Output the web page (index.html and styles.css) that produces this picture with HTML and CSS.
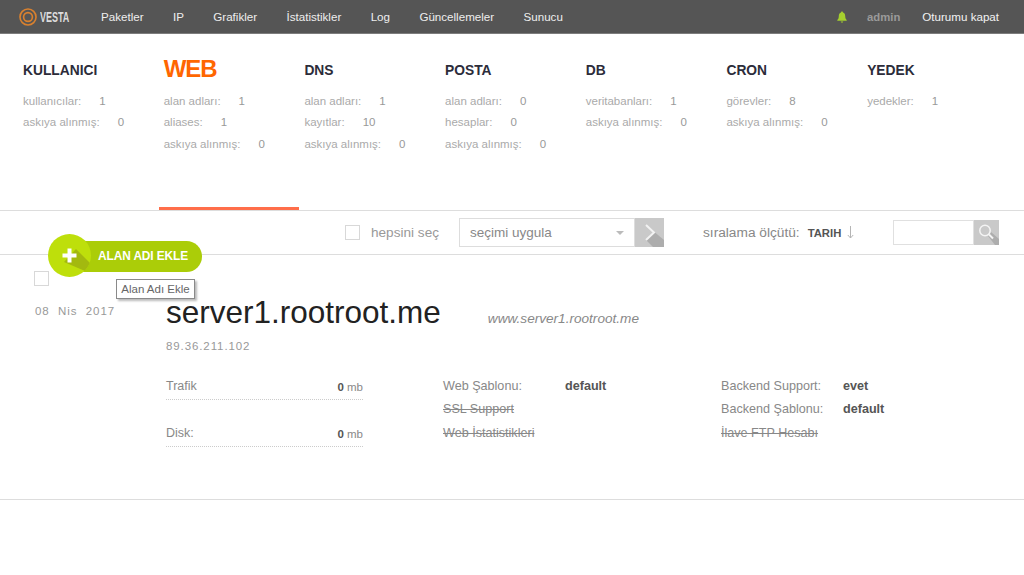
FILE: index.html
```html
<!DOCTYPE html>
<html lang="tr">
<head>
<meta charset="utf-8">
<title>Vesta</title>
<link rel="stylesheet" href="styles.css">
</head>
<body>
<header class="topbar">
  <div class="logo">
    <svg class="logo-mark" width="18" height="18" viewBox="0 0 22 22"><circle cx="11" cy="11" r="9.8" fill="none" stroke="#d9812f" stroke-width="2"/><circle cx="11" cy="11" r="5.4" fill="none" stroke="#d9812f" stroke-width="2"/></svg>
    <span class="logo-text">VESTA</span>
  </div>
  <nav class="nav">
    <a>Paketler</a><a>IP</a><a>Grafikler</a><a>İstatistikler</a><a>Log</a><a>Güncellemeler</a><a>Sunucu</a>
  </nav>
  <div class="user">
    <svg class="bell" width="10" height="12" viewBox="0 0 10 12"><path d="M5 0.5c.7 0 1 .5 1 1 1.5.5 2.2 1.8 2.2 3.4 0 2 .5 3 1.5 4v.8H.3v-.8c1-1 1.5-2 1.5-4C1.800 3.300 2.500 2 4 1.500c0-.5.3-1 1-1zM3.800 10.500h2.400C6.200 11.200 5.700 11.700 5 11.700s-1.200-.5-1.200-1.200z" fill="#a5cf2e"/></svg>
    <span class="admin">admin</span>
    <a class="logout">Oturumu kapat</a>
  </div>
</header>

<section class="tabs">
  <div class="tab">
    <h2>KULLANICI</h2>
    <p><span>kullanıcılar:</span><b>1</b></p>
    <p><span>askıya alınmış:</span><b>0</b></p>
  </div>
  <div class="tab active">
    <h2>WEB</h2>
    <p><span>alan adları:</span><b>1</b></p>
    <p><span>aliases:</span><b>1</b></p>
    <p><span>askıya alınmış:</span><b>0</b></p>
  </div>
  <div class="tab">
    <h2>DNS</h2>
    <p><span>alan adları:</span><b>1</b></p>
    <p><span>kayıtlar:</span><b>10</b></p>
    <p><span>askıya alınmış:</span><b>0</b></p>
  </div>
  <div class="tab">
    <h2>POSTA</h2>
    <p><span>alan adları:</span><b>0</b></p>
    <p><span>hesaplar:</span><b>0</b></p>
    <p><span>askıya alınmış:</span><b>0</b></p>
  </div>
  <div class="tab">
    <h2>DB</h2>
    <p><span>veritabanları:</span><b>1</b></p>
    <p><span>askıya alınmış:</span><b>0</b></p>
  </div>
  <div class="tab">
    <h2>CRON</h2>
    <p><span>görevler:</span><b>8</b></p>
    <p><span>askıya alınmış:</span><b>0</b></p>
  </div>
  <div class="tab">
    <h2>YEDEK</h2>
    <p><span>yedekler:</span><b>1</b></p>
  </div>
</section>

<section class="toolbar">
  <span class="check"></span>
  <span class="select-all">hepsini seç</span>
  <div class="apply">
    <div class="select"><span>seçimi uygula</span><i class="caret"></i></div>
    <button class="go" type="button" aria-label="uygula">
      <svg width="29" height="29" viewBox="0 0 29 29"><path d="M11 22 L20 14.500 L29 22 V29 H18 Z" fill="#adadad"/><path d="M11 7 L19 14.500 L11 22" fill="none" stroke="#f2f2f2" stroke-width="2"/></svg>
    </button>
  </div>
  <span class="sort">sıralama ölçütü:</span>
  <b class="sort-val">TARIH</b>
  <svg class="sort-arrow" width="7" height="13" viewBox="0 0 7 13"><path d="M3.500 0V12M.8 9L3.500 12L6.200 9" fill="none" stroke="#b5b5b5" stroke-width="1"/></svg>
  <div class="search">
    <div class="search-input"></div>
    <button class="search-btn" type="button" aria-label="ara">
      <svg width="25" height="25" viewBox="0 0 25 25"><path d="M14 16 L17 12 L25 19 V25 H21 Z" fill="#adadad"/><circle cx="11" cy="10.500" r="5.200" fill="none" stroke="#f4f4f4" stroke-width="1.500"/><path d="M15 14.500 L19 18.500" stroke="#f4f4f4" stroke-width="2"/></svg>
    </button>
  </div>
</section>

<a class="add-btn">
  <span class="add-circle">
    <svg width="43" height="43" viewBox="0 0 43 43"><path d="M16 28 L28 15 L43 30 A21.500 21.500 0 0 1 37 37 Z" fill="#a3b90f"/><path d="M21.500 14.500V28.500M14.500 21.500H28.500" stroke="#fff" stroke-width="4"/></svg>
  </span>
  <span class="add-label">ALAN ADI EKLE</span>
</a>
<div class="tooltip">Alan Adı Ekle</div>

<section class="row">
  <div class="side">
    <span class="check"></span>
    <div class="date">08 &nbsp;Nis &nbsp;2017</div>
  </div>
  <div class="main">
    <div class="title"><h1>server1.rootroot.me</h1><em>www.server1.rootroot.me</em></div>
    <div class="ip">89.36.211.102</div>
    <div class="cols">
      <div class="usage">
        <div class="meter"><span>Trafik</span><span class="amt"><b>0</b> mb</span></div>
        <div class="meter"><span>Disk:</span><span class="amt"><b>0</b> mb</span></div>
      </div>
      <dl class="props first">
        <div><dt>Web Şablonu:</dt><dd>default</dd></div>
        <div><dt class="off">SSL Support</dt></div>
        <div><dt class="off">Web İstatistikleri</dt></div>
      </dl>
      <dl class="props second">
        <div><dt>Backend Support:</dt><dd>evet</dd></div>
        <div><dt>Backend Şablonu:</dt><dd>default</dd></div>
        <div><dt class="off">İlave FTP Hesabı</dt></div>
      </dl>
    </div>
  </div>
</section>
</body>
</html>
```
FILE: styles.css
```css
* { box-sizing: border-box; }
html, body { margin: 0; padding: 0; }
body { width: 1024px; height: 575px; overflow: hidden; background: #fff; font-family: "Liberation Sans", Arial, sans-serif; color: #777; position: relative; }

.topbar { height: 34px; background: #555; border-bottom: 1px solid #7d7d7d; display: flex; align-items: center; color: #eee; font-size: 11.600px; }
.logo { width: 101px; padding-left: 19px; display: flex; align-items: center; gap: 3px; }
.logo-mark { flex: none; }
.logo-text { font-size: 15px; font-weight: bold; color: #ddd; transform: scaleX(.6); transform-origin: left center; }
.nav { display: flex; gap: 29.400px; }
.nav a { color: #eee; }
.user { margin-left: auto; display: flex; align-items: center; padding-right: 25px; }
.bell { margin-right: 20px; }
.admin { color: #9a9a9a; font-weight: bold; margin-right: 22px; font-size: 11.300px; }
.logout { color: #f2f2f2; }

.tabs { height: 177px; display: flex; padding-left: 18px; border-bottom: 1px solid #ddd; }
.tab { width: 140.700px; padding: 29px 0 0 5px; position: relative; }
.tab h2 { margin: 0 0 13px; height: 15px; font-size: 13.800px; line-height: 15px; font-weight: bold; color: #2c2c3a; }
.tab p { margin: 0; height: 21.300px; line-height: 20px; font-size: 11.500px; color: #aaa; display: flex; }
.tab p b { font-weight: normal; margin-left: 18px; color: #999; }
.tab.active { height: 176px; border-bottom: 3px solid #ff6e4a; }
.tab.active h2 { font-size: 24px; color: #ff6600; letter-spacing: -1px; margin-top: -2px; margin-bottom: 15px; line-height: 15px; }

.toolbar { height: 44px; display: flex; align-items: center; border-bottom: 1px solid #ddd; padding: 0 25px 0 345px; }
.check { display: block; width: 15px; height: 15px; border: 1px solid #d8d8d8; background: #fff; }
.select-all { margin-left: 11px; font-size: 13.600px; color: #999; }
.apply { display: flex; margin-left: 20px; }
.select { width: 176px; height: 29px; border: 1px solid #ddd; display: flex; align-items: center; justify-content: space-between; padding: 0 10px; font-size: 13.500px; color: #888; }
.caret { width: 0; height: 0; border: 4px solid transparent; border-top-color: #bbb; border-bottom: 0; }
.go { width: 29px; height: 29px; padding: 0; border: 0; background: #c9c9c9; display: block; }
.go svg, .search-btn svg { display: block; }
.sort { margin-left: 39px; font-size: 13.700px; color: #888; }
.sort-val { margin-left: 8px; font-size: 11.300px; color: #555; }
.sort-arrow { margin-left: 6px; }
.search { display: flex; margin-left: auto; }
.search-input { width: 81px; height: 25px; border: 1px solid #e0e0e0; }
.search-btn { width: 25px; height: 25px; padding: 0; border: 0; background: #c9c9c9; display: block; }

.add-btn { position: absolute; left: 48px; top: 234px; display: flex; align-items: center; height: 44px; width: 154px; }
.add-circle { position: absolute; left: 0; top: 0; width: 43px; height: 43px; border-radius: 50%; background: #bedf0b; overflow: hidden; z-index: 1; }
.add-circle svg { display: block; }
.add-label { position: absolute; left: 8px; top: 7px; width: 146px; height: 31px; line-height: 30px; padding-left: 42px; border-radius: 16px; background: #abcd08; color: #fff; font-size: 11.900px; font-weight: bold; white-space: nowrap; letter-spacing: -.1px; }
.tooltip { position: absolute; left: 116px; top: 279px; height: 20px; width: 79px; line-height: 19px; text-align: center; background: #fff; border: 1px solid #8a8a8a; box-shadow: 2px 2px 2px #bbb; font-size: 11.500px; color: #666; }

.row { height: 245px; border-bottom: 1px solid #ddd; display: flex; }
.side { width: 166px; padding: 16px 0 0 34px; flex: none; }
.date { margin-top: 19px; padding-left: 1px; font-size: 11.500px; letter-spacing: .95px; color: #999; white-space: nowrap; }
.main { flex: 1; }
.title { display: flex; align-items: baseline; margin-top: 41px; height: 33px; }
.title h1 { margin: 0; font-size: 31.500px; line-height: 33px; font-weight: normal; color: #222; white-space: nowrap; }
.title em { margin-left: 47px; font-size: 13.600px; color: #888; }
.ip { margin-top: 11px; font-size: 11.500px; letter-spacing: .9px; color: #999; }
.cols { display: flex; margin-top: 26px; }
.usage { width: 197px; }
.meter { height: 22px; padding-top: 1px; border-bottom: 1px dotted #ccc; margin-bottom: 25px; font-size: 12.500px; color: #888; display: flex; justify-content: space-between; line-height: 15px; }
.amt { font-size: 11.500px; padding-top: 1px; line-height: 14px; }
.amt b { color: #555; }
.props { margin: .5px 0 0; font-size: 12.600px; }
.props div { display: flex; height: 23.500px; line-height: 14px; }
.props dt { color: #888; }
.props dd { margin: 0; font-weight: bold; color: #555; }
.props .off { text-decoration: line-through; }
.first { margin-left: 80px; width: 278px; }
.first dt { width: 122px; }
.first .off { width: auto; }
.second dt { width: 122px; }
.second .off { width: auto; }
```
